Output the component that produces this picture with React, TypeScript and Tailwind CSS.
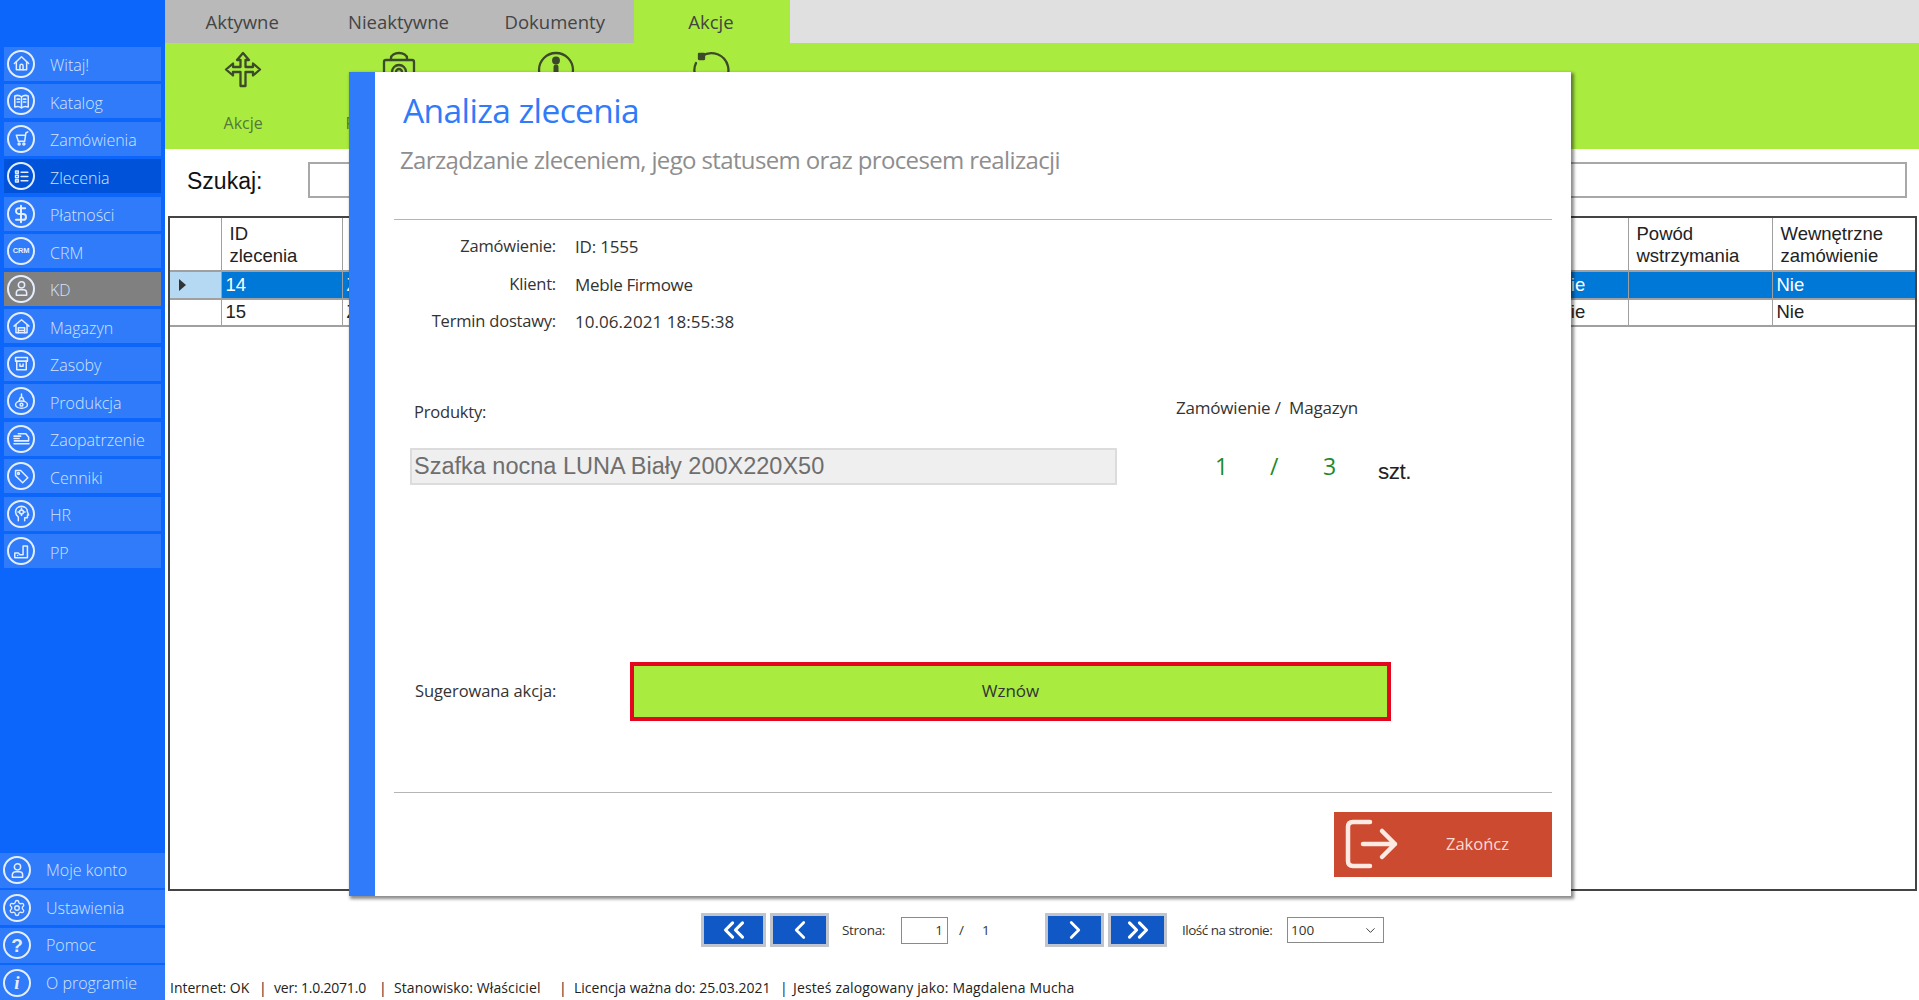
import React from "react";
import { ChevronDown, ChevronLeft, ChevronRight, ChevronsLeft, ChevronsRight, DollarSign, Settings } from "lucide-react";

const segoe = "font-['Open_Sans','Noto_Sans',sans-serif]";

function G({ children }: { children: React.ReactNode }) {
  return (
    <svg width="19" height="19" viewBox="0 0 24 24" fill="none" stroke="currentColor" strokeWidth="1.9" strokeLinecap="round" strokeLinejoin="round">
      {children}
    </svg>
  );
}
const UserG = () => (
  <G>
    <circle cx="12" cy="7.5" r="4" />
    <path d="M5.5 20.5 V17.5 a4 4 0 0 1 4-4 h5 a4 4 0 0 1 4 4 V20.5 Z" />
  </G>
);

type Item = { label: string; icon: React.ReactNode; state?: "active" | "muted" };
const top: Item[] = [
  { label: "Witaj!", icon: <G><path d="M3 12 L12 3.5 L21 12" /><path d="M5.5 10 V20 H18.5 V10" /><path d="M10 20 V15 a2 2 0 0 1 4 0 V20" /></G> },
  { label: "Katalog", icon: <G><path d="M12 6 C10 4.5 6 4 3.5 5 V19 C6 18 10 18.5 12 20 C14 18.5 18 18 20.5 19 V5 C18 4 14 4.5 12 6 Z" /><path d="M12 6 V20 M6.5 9 H9.5 M6.5 12.5 H9.5 M14.5 9 H17.5 M14.5 12.5 H17.5" /></G> },
  { label: "Zamówienia", icon: <G><path d="M20 3.5 L17.5 5 L16 15.5 H8 L5.5 8 H17" /><circle cx="9" cy="19" r="1.3" /><circle cx="15" cy="19" r="1.3" /></G> },
  { label: "Zlecenia", state: "active", icon: <G><path d="M4.5 5 H8 V8 H4.5 Z M4.5 10.5 H8 V13.5 H4.5 Z M4.5 16 H8 V19 H4.5 Z" /><path d="M11.5 6.5 H20 M11.5 12 H20 M11.5 17.5 H20" /></G> },
  { label: "Płatności", icon: <DollarSign size={20} strokeWidth={2.4} /> },
  { label: "CRM", icon: <span className="text-[7.5px] font-bold leading-none tracking-tight">CRM</span> },
  { label: "KD", icon: <UserG />, state: "muted" },
  { label: "Magazyn", icon: <G><path d="M2.5 11.5 L12 3.5 L21.5 11.5" /><path d="M5 10 V20 H19 V10" /><path d="M8 20 V13.5 H16 V20 M8 17 H16" /></G> },
  { label: "Zasoby", icon: <G><path d="M4.5 4.5 H19.5 V9 H4.5 Z" /><path d="M6 9 V20 H18 V9" /><path d="M10 12.5 V15.5 H14 V12.5" /></G> },
  { label: "Produkcja", icon: <G><path d="M12 2.5 V7 M9 11 L10.5 7 H13.5 L15 11" /><ellipse cx="12" cy="16" rx="7.5" ry="4.5" /><circle cx="12" cy="16" r="1.8" /></G> },
  { label: "Zaopatrzenie", icon: <G><path d="M8 6 H17.5 L21 10.5 V15 H3" /><path d="M2.5 9 H11 M2.5 12 H9" /><path d="M2.5 18.5 H21.5" /></G> },
  { label: "Cenniki", icon: <G><path d="M4.5 4.5 H11 L20 13.5 L13.5 20 L4.5 11 Z" /><circle cx="8.2" cy="8.2" r="1.2" /></G> },
  { label: "HR", icon: <G><path d="M8 21 V16.5 C5.5 14.5 4.5 12.5 4.5 10 C4.5 6 7.5 3 12 3 C16.5 3 19.5 6 19.5 10 L21 14 H19.5 V17.5 H16 V21" /><circle cx="12" cy="10" r="2.5" /><path d="M12 5.5 V7.5 M12 12.5 V14.5 M7.5 10 H9.5 M14.5 10 H16.5" /></G> },
  { label: "PP", icon: <G><path d="M3.5 20 V14 H8 L10 16 H14 V5 H19.5 V20 Z" /><path d="M7 17 H7.1" /></G> },
];
const bottom: Item[] = [
  { label: "Moje konto", icon: <UserG /> },
  { label: "Ustawienia", icon: <Settings size={18} strokeWidth={1.8} /> },
  { label: "Pomoc", icon: <span className="text-[19px] font-bold leading-none">?</span> },
  { label: "O programie", icon: <span className="font-['Liberation_Serif',serif] text-[19px] font-bold italic leading-none">i</span> },
];

function Circle({ children }: { children: React.ReactNode }) {
  return <span className="flex h-[28px] w-[28px] shrink-0 items-center justify-center rounded-full border-2 border-[#e4eeff] text-[#e4eeff]">{children}</span>;
}

function SideTop({ item }: { item: Item }) {
  const bg = item.state === "active" ? "bg-[#0053d8]" : item.state === "muted" ? "bg-[#808080]" : "bg-[#2f7bf9]";
  return (
    <div className={`flex h-[34px] items-center pl-[3px] ${bg}`}>
      <Circle>{item.icon}</Circle>
      <span className={`${segoe} ml-[15px] pt-[3px] text-[16px] font-light text-[#d4e3ff]`}>{item.label}</span>
    </div>
  );
}

function SideBottom({ item }: { item: Item }) {
  return (
    <div className="flex h-[35px] items-center bg-[#2f7bf9] pl-[3px]">
      <Circle>{item.icon}</Circle>
      <span className={`${segoe} ml-[15px] text-[16px] font-light text-[#d4e3ff]`}>{item.label}</span>
    </div>
  );
}

const rib = { width: 38, height: 38, viewBox: "0 0 38 38", fill: "none", stroke: "#3b4a2a", strokeWidth: 2.3, strokeLinejoin: "round" as const, strokeLinecap: "round" as const };

function MoveIcon() {
  return (
    <svg {...rib}>
      <path d="M19 2 L25 9 H21.5 V16 H29 V12.5 L36 18.5 L29 24.5 V21 H21.5 V35 H16.5 V21 H9 V24.5 L2 18.5 L9 12.5 V16 H16.5 V9 H13 Z" />
    </svg>
  );
}
function BagIcon() {
  return (
    <svg {...rib}>
      <path d="M11 9 V7 a8 5 0 0 1 16 0 V9" />
      <path d="M6 9 H32 a2 2 0 0 1 2 2 V33 a2 2 0 0 1-2 2 H6 a2 2 0 0 1-2-2 V11 a2 2 0 0 1 2-2 Z" />
      <circle cx="19" cy="21" r="7" />
      <circle cx="19" cy="21" r="3" />
    </svg>
  );
}
function InfoIcon() {
  return (
    <svg {...rib}>
      <circle cx="19" cy="19" r="17" />
      <circle cx="19" cy="9.5" r="2.8" fill="#3b4a2a" />
      <path d="M19 16 V29" strokeWidth="5" />
    </svg>
  );
}
function RefreshIcon() {
  return (
    <svg {...rib}>
      <path d="M9 5 A17 17 0 1 1 3 12" />
      <path d="M6 3 H11 V8 H6 Z" fill="#3b4a2a" />
    </svg>
  );
}

const th = "border-r border-[#a0a0a0] px-[8px] align-top pt-[5px] text-left font-normal leading-[22px]";
const td = "border-r border-b-2 border-[#a0a0a0] px-[4px] h-[27.5px] leading-none whitespace-nowrap overflow-hidden";

function PagerBtn({ w, children }: { w: string; children: React.ReactNode }) {
  return <span className={`flex h-[34px] ${w} items-center justify-center border-[3px] border-[#c0c4cc] bg-[#0f58c6] text-white`}>{children}</span>;
}

export default function App() {
  return (
    <div className="relative flex h-[1000px] w-[1919px] overflow-hidden bg-white font-['Liberation_Sans',sans-serif]">
      <aside className="flex h-full w-[165px] shrink-0 flex-col bg-[#0d66fb]">
        <div className="flex flex-col gap-[3.5px] px-[4px] pt-[46.5px]">
          {top.map((i) => <SideTop key={i.label} item={i} />)}
        </div>
        <div className="mt-auto flex flex-col gap-[2.5px]">
          {bottom.map((i) => <SideBottom key={i.label} item={i} />)}
        </div>
      </aside>

      <main className="flex min-w-0 flex-1 flex-col">
        <div className="flex h-[43px] bg-[#e0e0e0]">
          <div className="flex bg-[#b9b9b9]">
            {["Aktywne", "Nieaktywne", "Dokumenty"].map((t) => (
              <span key={t} className={`${segoe} flex w-[156.3px] items-center justify-center pr-[2px] text-[18.5px] text-[#444]`}>{t}</span>
            ))}
          </div>
          <span className={`${segoe} flex w-[156px] items-center justify-center bg-[#a9ec3f] pr-[2px] text-[18.5px] text-[#444]`}>Akcje</span>
        </div>

        <div className="flex h-[106px] bg-[#a9ec3f]">
          <div className="flex w-[156.3px] flex-col items-center pt-[8px]">
            <span className="flex h-[38px] items-center justify-center"><MoveIcon /></span>
            <span className={`${segoe} mt-[22px] whitespace-nowrap text-[16px] text-[#55783a]`}>Akcje</span>
          </div>
          <div className="flex w-[156.3px] flex-col items-center pt-[8px]">
            <span className="flex h-[38px] items-center justify-center"><BagIcon /></span>
            <span className={`${segoe} mt-[22px] whitespace-nowrap text-[16px] text-[#55783a]`}>Rezerwowanie</span>
          </div>
          <div className="flex w-[156.3px] flex-col items-center pt-[8px]">
            <span className="flex h-[38px] items-center justify-center"><InfoIcon /></span>
          </div>
          <div className="flex w-[156.3px] flex-col items-center pt-[8px]">
            <span className="flex h-[38px] items-center justify-center"><RefreshIcon /></span>
          </div>
        </div>

        <div className="flex h-[67px] items-start pt-[13px]">
          <span className="ml-[22px] w-[121px] text-[23px] leading-[39px] text-[#111]">Szukaj:</span>
          <span className="h-[36px] w-[1599px] border-2 border-[#a8a8a8] bg-white" />
        </div>

        <div className="ml-[3px] h-[675px] w-[1749px] overflow-hidden border-2 border-[#444] bg-white">
          <table className="w-[1745px] table-fixed border-collapse text-[18.5px] text-[#222]">
            <colgroup>
              <col className="w-[51px]" />
              <col className="w-[121px]" />
              <col className="w-[1211px]" />
              <col className="w-[75px]" />
              <col className="w-[144px]" />
              <col className="w-[143px]" />
            </colgroup>
            <thead>
              <tr className="h-[53px] border-b-2 border-[#a0a0a0]">
                <th className={th}></th>
                <th className={th}>ID<br />zlecenia</th>
                <th className={th}>Zlecenie</th>
                <th className={th}></th>
                <th className={th}>Powód<br />wstrzymania</th>
                <th className={th}>Wewnętrzne<br />zamówienie</th>
              </tr>
            </thead>
            <tbody>
              <tr className="bg-[#0078d7] text-white">
                <td className={`${td} bg-[#b5d8f3]`}>
                  <span className="ml-[5px] block h-0 w-0 border-y-[6px] border-l-[7px] border-y-transparent border-l-[#333]" />
                </td>
                <td className={td}>14</td><td className={td}>Zlecenie</td><td className={td}>Nie</td><td className={td}></td><td className={td}>Nie</td>
              </tr>
              <tr>
                <td className={td}></td>
                <td className={td}>15</td><td className={td}>Zlecenie</td><td className={td}>Nie</td><td className={td}></td><td className={td}>Nie</td>
              </tr>
            </tbody>
          </table>
        </div>

        <div className={`${segoe} ml-[536px] mt-[22px] flex h-[34px] items-center text-[13.5px] text-[#333]`}>
          <PagerBtn w="w-[65px]"><ChevronsLeft size={34} strokeWidth={2.2} /></PagerBtn>
          <span className="w-[4px]" />
          <PagerBtn w="w-[59px]"><ChevronLeft size={30} strokeWidth={2.2} /></PagerBtn>
          <span className="ml-[13px] w-[59px] tracking-[-0.3px]">Strona:</span>
          <span className="flex h-[27px] w-[47px] items-center justify-end border border-[#8a8a8a] pr-[4px]">1</span>
          <span className="ml-[11px] w-[23px]">/</span>
          <span className="w-[63px]">1</span>
          <PagerBtn w="w-[59px]"><ChevronRight size={30} strokeWidth={2.2} /></PagerBtn>
          <span className="w-[4px]" />
          <PagerBtn w="w-[59px]"><ChevronsRight size={34} strokeWidth={2.2} /></PagerBtn>
          <span className="ml-[15px] w-[105px] whitespace-nowrap tracking-[-0.5px]">Ilość na stronie:</span>
          <span className="flex h-[26px] w-[97px] items-center justify-between border border-[#8a8a8a] pl-[3px] pr-[5px]">100<ChevronDown size={15} strokeWidth={1.5} /></span>
        </div>

        <div className={`${segoe} ml-[5px] mt-[30px] flex whitespace-nowrap text-[14px] text-[#222]`}>
          <span className="w-[89px]">Internet: OK</span>
          <span className="w-[15px]">|</span>
          <span className="w-[105px] tracking-[-0.2px]">ver: 1.0.2071.0</span>
          <span className="w-[15px]">|</span>
          <span className="w-[165px] tracking-[0.1px]">Stanowisko: Właściciel</span>
          <span className="w-[15px]">|</span>
          <span className="w-[206px]">Licencja ważna do: 25.03.2021</span>
          <span className="w-[13px]">|</span>
          <span className="tracking-[0.14px]">Jesteś zalogowany jako: Magdalena Mucha</span>
        </div>
      </main>

      <section className="absolute left-[349px] top-[72px] flex h-[824px] w-[1222px] bg-white shadow-[2px_2px_3px_1px_rgba(0,0,0,0.45)]">
        <div className="w-[26px] shrink-0 bg-[#2f7bf9]" />
        <div className={`${segoe} flex flex-1 flex-col pl-[19px] pr-[19px]`}>
          <h1 className="ml-[9px] mt-[13px] text-[33.5px] leading-[50px] tracking-[-0.6px] text-[#2f7bf9]">Analiza zlecenia</h1>
          <p className="ml-[6px] mt-[8px] text-[24px] leading-[34px] tracking-[-0.63px] text-[#8e8e8e]">Zarządzanie zleceniem, jego statusem oraz procesem realizacji</p>
          <hr className="mt-[42px] border-t border-[#b5b5b5]" />
          <dl className="mt-[8px] text-[#333]">
            <div className="flex h-[37.5px] items-center">
              <dt className="w-[162px] text-right text-[16.5px] tracking-[-0.2px]">Zamówienie:</dt>
              <dd className="ml-[19px] text-[17px] tracking-[-0.2px]">ID: 1555</dd>
            </div>
            <div className="flex h-[37.5px] items-center">
              <dt className="w-[162px] text-right text-[16.5px] tracking-[-0.2px]">Klient:</dt>
              <dd className="ml-[19px] text-[17px] tracking-[-0.35px]">Meble Firmowe</dd>
            </div>
            <div className="flex h-[37.5px] items-center">
              <dt className="w-[162px] text-right text-[16.5px] tracking-[-0.2px]">Termin dostawy:</dt>
              <dd className="ml-[19px] text-[17px] tracking-[0.05px]">10.06.2021 18:55:38</dd>
            </div>
          </dl>
          <div className="mt-[49px] flex h-[36px] text-[#333]">
            <span className="ml-[20px] mt-[10px] w-[762px] text-[16.5px] tracking-[-0.2px]">Produkty:</span>
            <span className="mt-[5px] whitespace-pre text-[17px] tracking-[-0.2px]">{"Zamówienie /  Magazyn"}</span>
          </div>
          <div className="mt-[22px] flex h-[37px] items-center">
            <div className="ml-[16px] flex h-[37px] w-[707px] items-center border-2 border-[#dcdcdc] bg-[#efefef] pl-[2px] pt-[1px] font-['Liberation_Sans',sans-serif] text-[23.5px] text-[#6e6e6e]">Szafka nocna LUNA Biały 200X220X50</div>
            <span className="ml-[98px] w-[55px] text-[23px] font-medium text-[#1f8a2c]">1</span>
            <span className="w-[53px] text-[23px] font-medium text-[#1f8a2c]">/</span>
            <span className="w-[55px] text-[23px] font-medium text-[#1f8a2c]">3</span>
            <span className="mt-[12px] font-['Liberation_Sans',sans-serif] text-[22.5px] font-medium tracking-[-0.5px] text-[#222]">szt.</span>
          </div>
          <div className="mt-[177px] flex h-[59px] items-center text-[#333]">
            <span className="ml-[21px] w-[215px] text-[16.5px] tracking-[-0.1px]">Sugerowana akcja:</span>
            <div className="flex h-[59px] w-[761px] items-center justify-center border-[4px] border-[#e3061f] bg-[#a9ec3f] text-[17px] text-[#333]">Wznów</div>
          </div>
          <hr className="mt-[71px] border-t border-[#b5b5b5]" />
          <div className="mt-[19px] flex h-[65px] w-[218px] items-center self-end bg-[#cc4a30] pl-[9px] text-white">
            <svg width="56" height="50" viewBox="0 0 56 50" fill="none" stroke="#ffe9e3" strokeWidth="4.5" strokeLinecap="round" strokeLinejoin="round">
              <path d="M27 3 H10 Q5 3 5 8 V42 Q5 47 10 47 H27" />
              <path d="M20 25 H52 M39 12 L52 25 L39 38" />
            </svg>
            <span className="ml-[47px] text-[16.5px] text-[#fbdcd4]">Zakończ</span>
          </div>
        </div>
      </section>
    </div>
  );
}
